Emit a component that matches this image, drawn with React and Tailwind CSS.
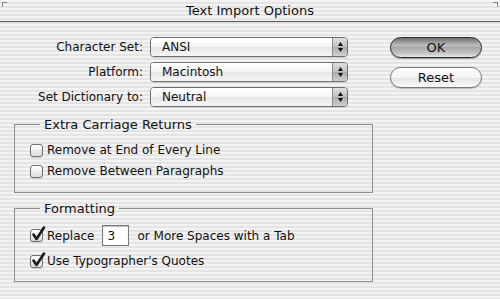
import React from 'react';

const stripes =
  'bg-[repeating-linear-gradient(to_bottom,#f3f3f3_0px,#f3f3f3_2px,#e4e4e4_2px,#e4e4e4_4px)]';

const Popup = ({ value }) => (
  <div className="flex h-[20px] w-[198px] rounded-[4px] border border-[#6e6e6e] overflow-hidden shadow-[0_1px_0_#d0d0d0]">
    <div className="flex-1 flex items-center pl-[11px] bg-[linear-gradient(to_bottom,#ffffff,#f4f4f4_50%,#e6e6e6_51%,#f6f6f6)] text-[#111]">
      {value}
    </div>
    <div className="w-[15px] border-l border-[#8a8a8a] flex flex-col items-center justify-center gap-[2px] bg-[linear-gradient(to_bottom,#e0e0e0,#c0c0c0_50%,#aaaaaa_51%,#d0d0d0)]">
      <svg width="5" height="4" viewBox="0 0 5 4">
        <path d="M2.5 0 L5 4 L0 4 Z" fill="#111" />
      </svg>
      <svg width="5" height="4" viewBox="0 0 5 4">
        <path d="M0 0 L5 0 L2.5 4 Z" fill="#111" />
      </svg>
    </div>
  </div>
);

const Checkbox = ({ checked }) => (
  <div className="relative w-[13px] h-[13px] rounded-[3px] border border-[#707070] bg-[linear-gradient(to_bottom,#ffffff,#dcdcdc)] shrink-0 shadow-[0_1px_0_#cfcfcf]">
    {checked && (
      <svg className="absolute left-[1px] top-[-4px]" width="14" height="15" viewBox="0 0 14 15">
        <path d="M1.5 8.5 L4.5 13 L12 1.5" fill="none" stroke="#1a1a1a" strokeWidth="2.6" strokeLinecap="round" strokeLinejoin="round" />
      </svg>
    )}
  </div>
);

const Row = ({ label, value }) => (
  <div className="flex items-center">
    <div className="w-[136px] pr-[7px] text-right">{label}</div>
    <Popup value={value} />
  </div>
);

export default function App() {
  return (
    <div
      className={`w-[500px] h-[299px] ${stripes} text-[12px] text-[#111] overflow-hidden relative`}
      style={{ fontFamily: '"DejaVu Sans", "Liberation Sans", sans-serif' }}
    >
      {/* title bar */}
      <div className="relative h-[22px] flex items-center justify-center border-b border-[#555] text-[13px]">
        <span className="absolute left-[2px] top-[2px] w-[5px] h-[5px] border-l border-t border-[#888]" />
        <span className="absolute right-[2px] top-[2px] w-[5px] h-[5px] border-r border-t border-[#888]" />
        Text Import Options
      </div>

      <div className="flex pt-[15px] pl-[14px]">
        <div className="flex flex-col gap-[5px]">
          <Row label="Character Set:" value="ANSI" />
          <Row label="Platform:" value="Macintosh" />
          <Row label="Set Dictionary to:" value="Neutral" />
        </div>
        <div className="ml-[42px] flex flex-col gap-[9px]">
          <button className="w-[92px] h-[21px] rounded-full border border-[#2e2e2e] bg-[linear-gradient(to_bottom,#707070,#bdbdbd_40%,#a8a8a8_50%,#c4c4c4_80%,#e6e6e6)] text-[13px] text-[#111] shadow-[0_1px_1px_#999]">
            OK
          </button>
          <button className="w-[92px] h-[21px] rounded-full border border-[#777] bg-[linear-gradient(to_bottom,#ffffff,#f2f2f2_50%,#e4e4e4_51%,#fafafa)] text-[13px] text-[#111] shadow-[0_1px_1px_#bbb]">
            Reset
          </button>
        </div>
      </div>

      <fieldset className="ml-[14px] mt-[10px] w-[359px] h-[76px] border border-[#8e8e8e] pl-[15px]">
        <legend className="ml-[10px] px-[4px] text-[13px] leading-[15px]">Extra Carriage Returns</legend>
        <div className="flex flex-col gap-[8px] pt-[12px] leading-[13px]">
          <label className="flex items-center gap-[4px]">
            <Checkbox />
            Remove at End of Every Line
          </label>
          <label className="flex items-center gap-[4px]">
            <Checkbox />
            Remove Between Paragraphs
          </label>
        </div>
      </fieldset>

      <fieldset className="ml-[14px] mt-[8px] w-[359px] h-[81px] border border-[#8e8e8e] pl-[15px]">
        <legend className="ml-[10px] px-[4px] text-[13px] leading-[15px]">Formatting</legend>
        <div className="flex flex-col gap-[6px] pt-[9px]">
          <label className="flex items-center gap-[4px]">
            <Checkbox checked />
            Replace
            <span className="ml-[4px] w-[27px] h-[21px] border border-[#7a7a7a] bg-white flex items-center pl-[4px] shadow-[inset_0_1px_1px_#bbb]">
              3
            </span>
            <span className="ml-[4px]">or More Spaces with a Tab</span>
          </label>
          <label className="flex items-center gap-[4px]">
            <Checkbox checked />
            Use Typographer's Quotes
          </label>
        </div>
      </fieldset>
    </div>
  );
}
